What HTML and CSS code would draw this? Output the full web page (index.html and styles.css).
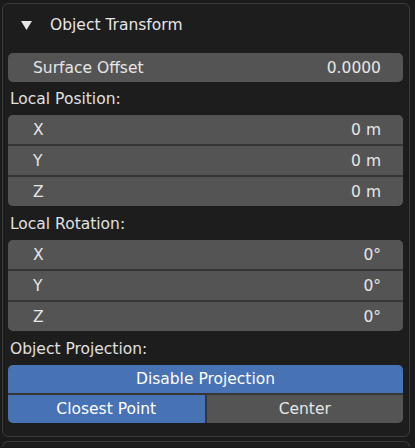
FILE: index.html
```html
<!DOCTYPE html>
<html>
<head>
<meta charset="utf-8">
<link rel="stylesheet" href="styles.css">
</head>
<body>
<div class="panel">
  <div class="header">
    <svg class="tri" width="11" height="9" viewBox="0 0 11 9"><polygon points="0,0 11,0 5.5,9" fill="#e6e6e6"/></svg>
    <span class="title">Object Transform</span>
  </div>
  <div class="group">
    <div class="field"><span>Surface Offset</span><span>0.0000</span></div>
  </div>
  <div class="label first">Local Position:</div>
  <div class="group">
    <div class="field"><span>X</span><span>0 m</span></div>
    <div class="field"><span>Y</span><span>0 m</span></div>
    <div class="field"><span>Z</span><span>0 m</span></div>
  </div>
  <div class="label">Local Rotation:</div>
  <div class="group">
    <div class="field"><span>X</span><span>0°</span></div>
    <div class="field"><span>Y</span><span>0°</span></div>
    <div class="field"><span>Z</span><span>0°</span></div>
  </div>
  <div class="label">Object Projection:</div>
  <div class="group">
    <div class="btn on">Disable Projection</div>
    <div class="row">
      <div class="btn on">Closest Point</div>
      <div class="btn">Center</div>
    </div>
  </div>
</div>
<div class="panel next"></div>
</body>
</html>
```
FILE: styles.css
```css
html, body {
  margin: 0;
  padding: 0;
  background: #1a1a1a;
  font-family: "DejaVu Sans", sans-serif;
  font-size: 15.5px;
  color: #e3e3e3;
  overflow: hidden;
}
.panel {
  box-sizing: border-box;
  width: 408px;
  margin: 3px 0 0 2px;
  border: 1px solid #3c3c3c;
  border-radius: 6px;
  background: #1d1d1d;
  padding: 0 6px 13px 5px;
  display: flex;
  flex-direction: column;
}
.panel.next {
  margin-top: 4px;
  height: 6px;
  padding: 0;
  border-bottom: none;
  border-radius: 6px 6px 0 0;
}
.header {
  height: 42px;
  margin-bottom: 7px;
  display: flex;
  align-items: center;
}
.tri {
  margin-left: 13px;
  margin-right: 18px;
}
.title {
  line-height: 20px;
  color: #e6e6e6;
}
.group {
  display: flex;
  flex-direction: column;
  gap: 2px;
  background: #363636;
  border-radius: 5px;
  overflow: hidden;
}
.field {
  height: 29px;
  background: #545454;
  display: flex;
  align-items: center;
  justify-content: space-between;
  padding: 0 22px 0 25px;
  line-height: 20px;
  color: #e6e6e6;
}
.label {
  line-height: 20px;
  margin: 8px 0 6px 2px;
  color: #e0e0e0;
}
.label.first {
  margin-top: 7px;
}
.row {
  display: flex;
  gap: 2px;
}
.btn {
  height: 28px;
  flex: none;
  background: #545454;
  display: flex;
  align-items: center;
  justify-content: center;
  line-height: 20px;
  color: #e6e6e6;
}
.row .btn {
  flex: 1 1 0;
}
.btn.on {
  background: #4772b3;
  color: #ffffff;
}
```
